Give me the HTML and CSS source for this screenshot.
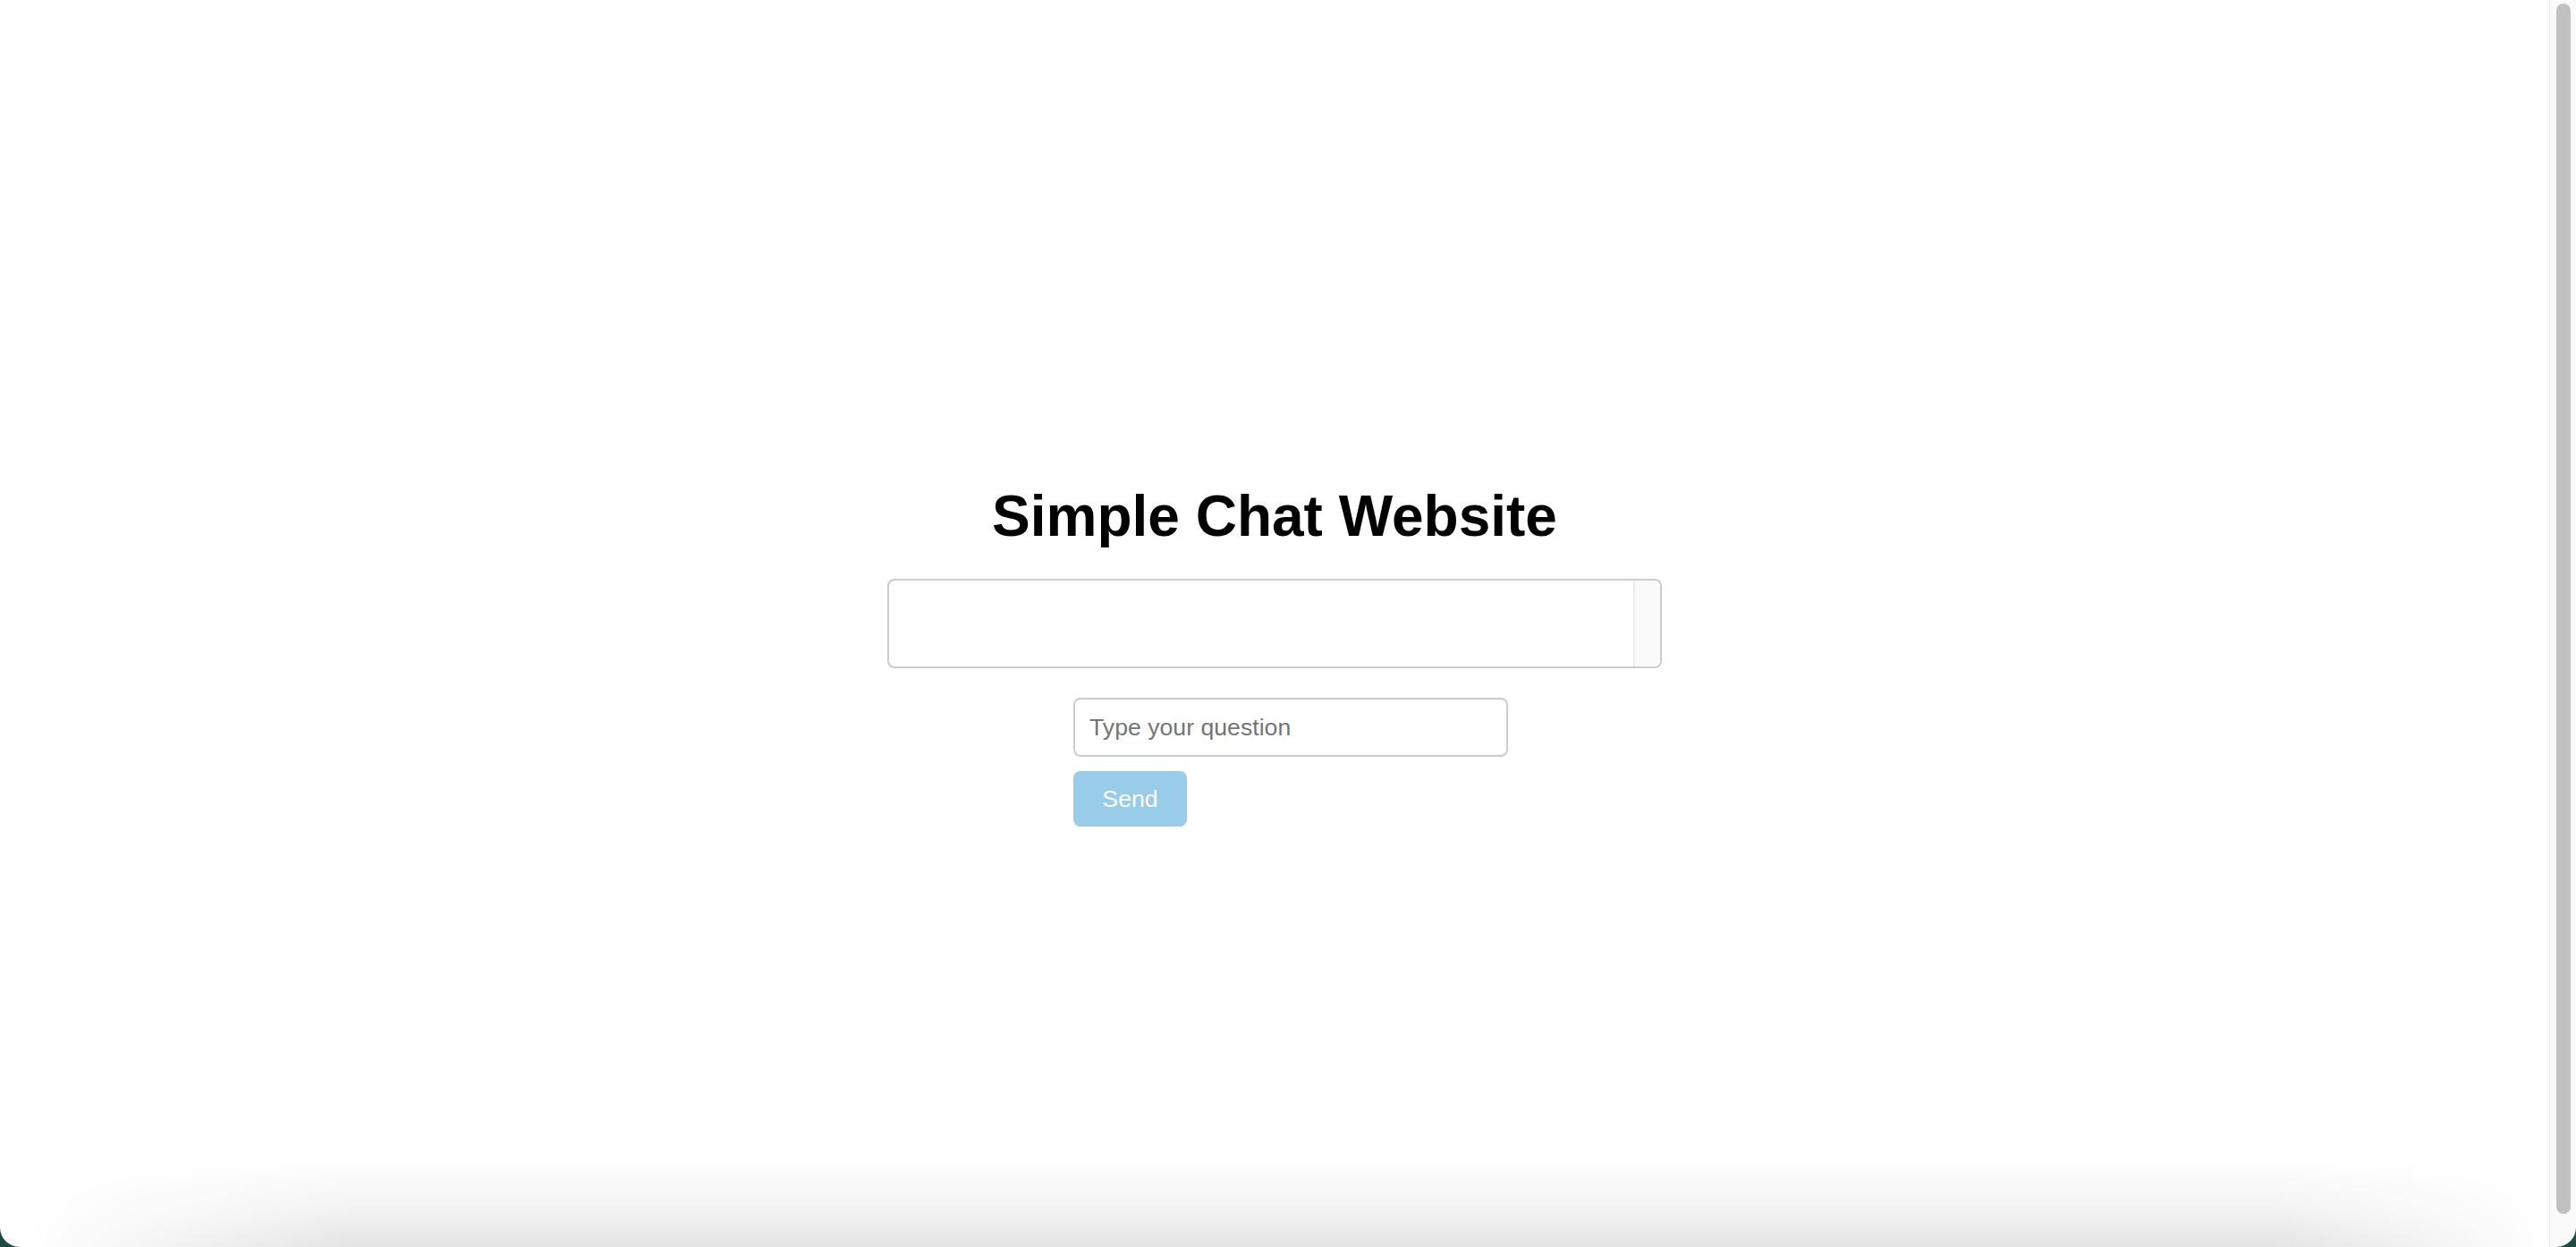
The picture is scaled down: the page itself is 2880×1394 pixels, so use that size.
FILE: index.html
```html
<!DOCTYPE html>
<html lang="en">
<head>
    <meta charset="UTF-8">
    <meta name="viewport" content="width=device-width, initial-scale=1.0">
    <title>Simple Chat Website</title>
    <link rel="stylesheet" href="styles.css">
</head>
<body>
    <div class="page">
        <h1>Simple Chat Website</h1>

        <div class="chat-box">
            <div class="chat-messages" id="chatMessages"></div>
            <div class="chat-scroll"></div>
        </div>

        <form class="chat-form" onsubmit="return false;">
            <input type="text" class="question-input" placeholder="Type your question">
            <button type="submit" class="send-btn" disabled>Send</button>
        </form>
    </div>

    <div class="page-scroll">
        <div class="page-thumb"></div>
    </div>

    <div class="window-shade"></div>
    <div class="window-frame"></div>
</body>
</html>
```

FILE: styles.css
```css
html, body {
    height: 100%;
    overflow: hidden;
}
body {
    margin: 0;
    display: flex;
    background: #fff;
    font-family: 'Liberation Sans', Arial, sans-serif;
    color: #000;
}
.page {
    flex: 1;
    box-sizing: border-box;
    padding-top: 540px;
    display: flex;
    flex-direction: column;
    align-items: center;
}
h1 {
    font-size: 64px;
    font-weight: bold;
    margin: 0 0 33px;
    line-height: 74px;
}
.chat-box {
    width: 866px;
    height: 100px;
    box-sizing: border-box;
    border: 2px solid #ccc;
    border-radius: 8px;
    display: flex;
    overflow: hidden;
    background: #fff;
}
.chat-messages {
    flex: 1;
}
.chat-scroll {
    width: 28px;
    background: #fafafa;
    border-left: 2px solid #ececec;
}
.chat-form {
    width: 866px;
    box-sizing: border-box;
    padding-left: 208px;
    margin-top: 33px;
    display: flex;
    flex-direction: column;
    align-items: flex-start;
    gap: 16px;
}
.question-input {
    width: 486px;
    height: 66px;
    box-sizing: border-box;
    border: 2px solid #ccc;
    border-radius: 8px;
    padding: 0 16px;
    font-family: 'Liberation Sans', Arial, sans-serif;
    font-size: 26.67px;
    color: #333;
    outline: none;
}
.question-input::placeholder {
    color: #757575;
}
.send-btn {
    background: #98cce9;
    color: #fff;
    border: none;
    border-radius: 8px;
    width: 127px;
    padding: 0;
    height: 62px;
    font-family: 'Liberation Sans', Arial, sans-serif;
    font-size: 26.67px;
    cursor: not-allowed;
}
.page-scroll {
    width: 30px;
    box-sizing: border-box;
    background: #fafafa;
    border-left: 1px solid #e8e8e8;
    padding: 4px 6px 37px 7px;
    display: flex;
}
.page-thumb {
    flex: 1;
    background: #c1c1c1;
    border-radius: 8px;
}
.window-shade {
    position: fixed;
    left: 0;
    right: 0;
    bottom: 0;
    height: 100px;
    pointer-events: none;
    background: linear-gradient(to top, rgba(0, 0, 0, 0.11), rgba(0, 0, 0, 0.05) 40%, rgba(0, 0, 0, 0));
    -webkit-mask-image: linear-gradient(to right, transparent 1%, #000 14%, #000 88%, transparent 99%);
}
.window-frame {
    position: fixed;
    top: 0;
    left: 0;
    right: 0;
    bottom: 0;
    pointer-events: none;
    border-radius: 0 0 22px 22px;
    box-shadow: 0 0 0 40px #1d4a44;
}
```
